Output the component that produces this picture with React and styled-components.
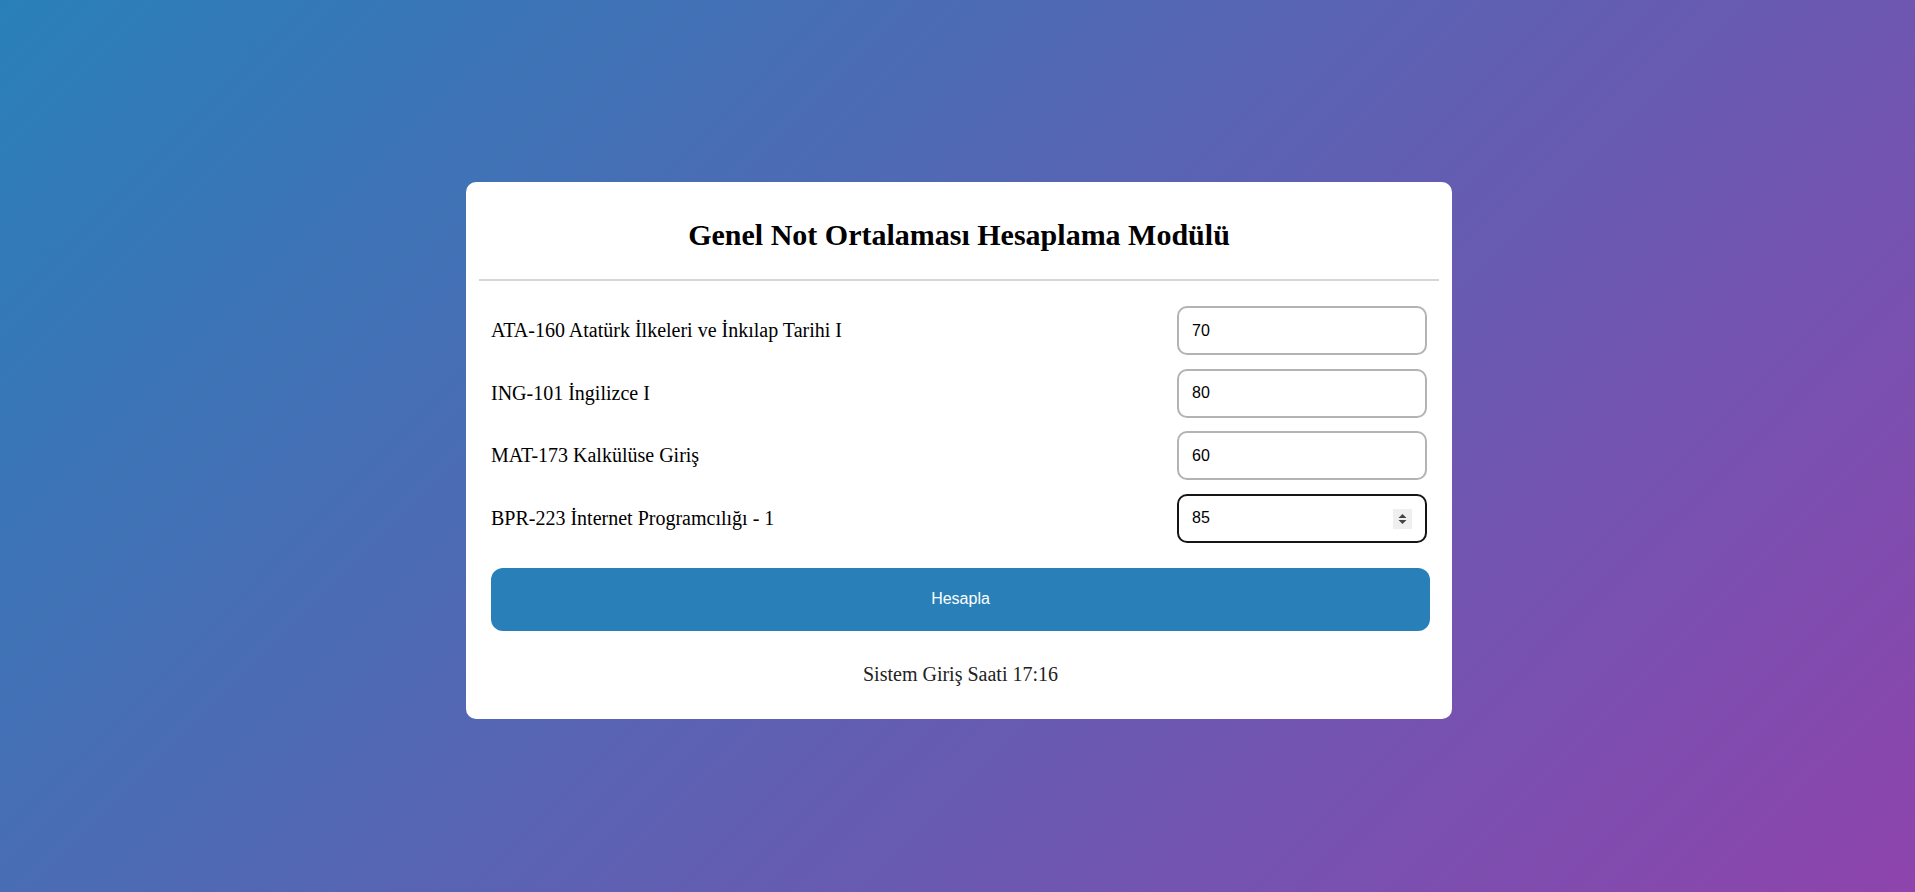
import React from 'react';
import styled, { createGlobalStyle } from 'styled-components';

const GlobalStyle = createGlobalStyle`
  html, body { margin: 0; padding: 0; }
  body {
    min-height: 892px;
    background: linear-gradient(135deg, #2980b9, #8e44ad);
    font-family: "Liberation Serif", "Times New Roman", serif;
  }
  input[type=number]::-webkit-inner-spin-button,
  input[type=number]::-webkit-outer-spin-button {
    -webkit-appearance: none;
    margin: 0;
  }
`;

const Page = styled.div`
  min-height: 892px;
  box-sizing: border-box;
  padding: 182px 0 0 3px;
  display: flex;
  justify-content: center;
  align-items: flex-start;
`;

const Card = styled.div`
  width: 986px;
  box-sizing: border-box;
  background: #fff;
  border-radius: 10px;
  padding: 0 13px 0;
`;

const Title = styled.h1`
  margin: 0;
  padding: 28px 0 20px;
  text-align: center;
  font-family: "Liberation Serif", "Times New Roman", serif;
  font-size: 30px;
  font-weight: bold;
  color: #000;
  line-height: 49px;
  border-bottom: 2px solid #d6d6d6;
`;

const Form = styled.div`
  padding: 25px 9px 0 12px;
  display: flex;
  flex-direction: column;
`;

const Rows = styled.div`
  display: flex;
  flex-direction: column;
  gap: 13.5px;
`;

const Row = styled.div`
  display: flex;
  justify-content: space-between;
  align-items: center;
`;

const Label = styled.label`
  font-family: "Liberation Serif", "Times New Roman", serif;
  font-size: 20px;
  color: #000;
`;

const InputWrap = styled.div`
  position: relative;
  margin-right: 3px;
`;

const Input = styled.input`
  width: 250px;
  height: 49px;
  box-sizing: border-box;
  border: 2px solid ${p => (p.$active ? '#151515' : '#b3b3b3')};
  border-radius: 10px;
  padding: 0 13px;
  font-family: "Liberation Sans", Arial, sans-serif;
  font-size: 16px;
  color: #000;
  background: #fff;
  outline: none;
`;

const Spinner = styled.div`
  position: absolute;
  right: 15px;
  top: 15px;
  width: 19px;
  height: 20px;
  background: #efefef;
  display: flex;
  align-items: center;
  justify-content: center;
`;

const Button = styled.button`
  margin-top: 25px;
  height: 63px;
  border: none;
  border-radius: 12px;
  background: #2980b9;
  color: #fff;
  font-family: "Liberation Sans", Arial, sans-serif;
  font-size: 16px;
  cursor: pointer;
`;

const Footer = styled.p`
  margin: 0;
  padding: 32px 0 33px;
  text-align: center;
  font-family: "Liberation Serif", "Times New Roman", serif;
  font-size: 20px;
  color: #222;
`;

const courses = [
  { label: 'ATA-160 Atatürk İlkeleri ve İnkılap Tarihi I', value: '70' },
  { label: 'ING-101 İngilizce I', value: '80' },
  { label: 'MAT-173 Kalkülüse Giriş', value: '60' },
  { label: 'BPR-223 İnternet Programcılığı - 1', value: '85', active: true },
];

export default function App() {
  return (
    <>
      <GlobalStyle />
      <Page>
        <Card>
          <Title>Genel Not Ortalaması Hesaplama Modülü</Title>
          <Form>
            <Rows>
              {courses.map((c, i) => (
                <Row key={i}>
                  <Label htmlFor={`n${i}`}>{c.label}</Label>
                  <InputWrap>
                    <Input id={`n${i}`} type="number" defaultValue={c.value} $active={c.active} />
                    {c.active && (
                      <Spinner>
                        <svg width="9" height="12" viewBox="0 0 9 12">
                          <path d="M4.5 1 L8.5 5 L0.5 5 Z" fill="#444" />
                          <path d="M4.5 11 L8.5 7 L0.5 7 Z" fill="#444" />
                        </svg>
                      </Spinner>
                    )}
                  </InputWrap>
                </Row>
              ))}
            </Rows>
            <Button type="button">Hesapla</Button>
            <Footer>Sistem Giriş Saati 17:16</Footer>
          </Form>
        </Card>
      </Page>
    </>
  );
}
